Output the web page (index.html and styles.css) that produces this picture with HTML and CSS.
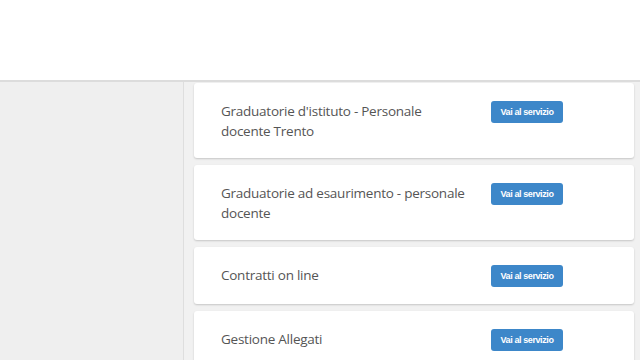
FILE: index.html
```html
<!DOCTYPE html>
<html lang="it">
<head>
<meta charset="utf-8">
<link rel="stylesheet" href="styles.css">
</head>
<body>
<header class="topbar"></header>
<div class="layout">
  <aside class="sidebar"></aside>
  <main class="content">
    <div class="card">
      <div class="card-title">Graduatorie d'istituto - Personale docente Trento</div>
      <a class="btn">Vai al servizio</a>
    </div>
    <div class="card">
      <div class="card-title">Graduatorie ad esaurimento - personale docente</div>
      <a class="btn">Vai al servizio</a>
    </div>
    <div class="card">
      <div class="card-title">Contratti on line</div>
      <a class="btn">Vai al servizio</a>
    </div>
    <div class="card">
      <div class="card-title">Gestione Allegati</div>
      <a class="btn">Vai al servizio</a>
    </div>
  </main>
</div>
</body>
</html>
```
FILE: styles.css
```css
html, body {
  margin: 0;
  padding: 0;
  height: 100%;
  overflow: hidden;
}
body {
  font-family: "Open Sans", "Liberation Sans", sans-serif;
  background: #f0f0f0;
}
.topbar {
  background: #ffffff;
  border-bottom: 2px solid #dcdcdc;
  box-sizing: border-box;
  height: 82px;
}
.layout {
  display: flex;
  height: 278px;
}
.sidebar {
  width: 183px;
  flex: 0 0 183px;
  background: #efefef;
  border-right: 1px solid #dedede;
}
.content {
  flex: 1;
  background: #f1f1f1;
  padding: 1px 6px 0 10px;
  display: flex;
  flex-direction: column;
  gap: 7px;
}
.card {
  background: #ffffff;
  border-radius: 3px;
  box-shadow: 0 1px 2px rgba(0,0,0,0.18);
  padding: 18px 27px 17px 27px;
  display: flex;
  align-items: flex-start;
  gap: 20px;
}
.card-title {
  flex: 0 0 250px;
  font-size: 13.5px;
  line-height: 20px;
  color: #555555;
  letter-spacing: -0.25px;
}
.btn {
  display: inline-block;
  width: 72px;
  height: 22px;
  line-height: 22px;
  background: #3d87c9;
  color: #ffffff;
  border-radius: 3px;
  font-size: 9px;
  font-weight: bold;
  text-align: center;
  letter-spacing: -0.4px;
  white-space: nowrap;
  font-family: "Liberation Sans", sans-serif;
}
```
